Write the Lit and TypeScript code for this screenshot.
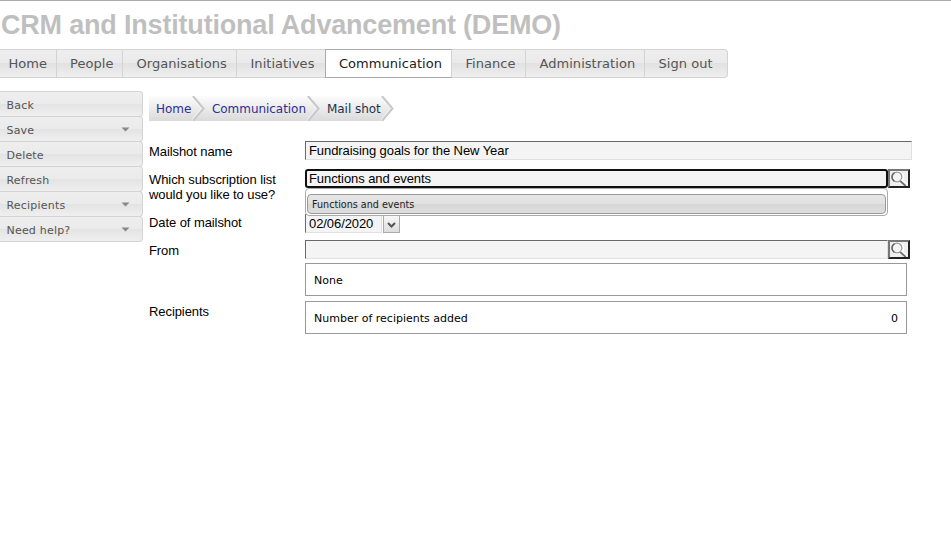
import { LitElement, html, css, svg } from "lit";
import { customElement } from "lit/decorators.js";
import { classMap } from "lit/directives/class-map.js";

const tabs = [
  { label: "Home", width: 57, pad: 8.5, active: false },
  { label: "People", width: 66, pad: 13, active: false },
  { label: "Organisations", width: 114, pad: 13.5, active: false },
  { label: "Initiatives", width: 89, pad: 13.5, active: false },
  { label: "Communication", width: 127, pad: 13, active: true },
  { label: "Finance", width: 74, pad: 13.5, active: false },
  { label: "Administration", width: 119, pad: 13.5, active: false },
  { label: "Sign out", width: 83, pad: 13.5, active: false },
];

const actions = [
  { label: "Back", menu: false },
  { label: "Save", menu: true },
  { label: "Delete", menu: false },
  { label: "Refresh", menu: false },
  { label: "Recipients", menu: true },
  { label: "Need help?", menu: true },
];

const crumbs = [
  { label: "Home", width: 56, here: false },
  { label: "Communication", width: 115, here: false },
  { label: "Mail shot", width: 73, here: true },
];

const magnifier = svg`
  <circle cx="7.4" cy="6.2" r="5.6" fill="#f4f4f4" stroke="#fff" stroke-width="2"></circle>
  <circle cx="7" cy="6" r="4.9" fill="none" stroke="#999" stroke-width="1.2"></circle>
  <path d="M4.6 1.6A5 5 0 0 0 4.4 10.3" fill="none" stroke="#666" stroke-width="1.5"></path>
  <path d="M10.8 9.2L16.8 14.2" stroke="#fff" stroke-width="2.6"></path>
  <path d="M10.2 10L15.8 15" stroke="#707070" stroke-width="1.8"></path>`;

@customElement("app-root")
export class AppRoot extends LitElement {
  static styles = css`
    :host {
      display: block;
      box-sizing: border-box;
      height: 534px;
      overflow: hidden;
      background: #fff;
      border-top: 1px solid #aaa;
      color: #000;
      font: 13px/15px "Liberation Sans", Arial, sans-serif;
      letter-spacing: -0.08px;
    }
    * { box-sizing: border-box; }
    h1 {
      margin: 0;
      height: 48px;
      padding: 9px 0 0 1px;
      color: #bfbfbf;
      font-size: 27px;
      line-height: 31px;
      font-weight: bold;
      letter-spacing: -0.19px;
      white-space: nowrap;
    }
    nav, aside, .crumbs, .box, .option { font-family: "DejaVu Sans", Verdana, sans-serif; letter-spacing: 0; }
    nav { display: flex; height: 29px; }
    .tab {
      height: 29px;
      border: 1px solid #d3d3d3;
      border-left: 0;
      background: linear-gradient(#eee 0, #eaeaea 48%, #e1e1e1 50%, #efefef 100%);
      color: #555;
      line-height: 27px;
      letter-spacing: 0.04px;
      white-space: nowrap;
    }
    .tab:last-child { border-radius: 0 4px 4px 0; }
    .tab.active {
      margin-left: -1px;
      border: 1px solid #aaa;
      border-right-color: #d3d3d3;
      background: #fff;
      color: #212121;
    }
    .page { display: flex; padding-top: 13px; }
    aside { width: 143px; flex: none; }
    .action {
      display: flex;
      align-items: center;
      justify-content: space-between;
      height: 26px;
      margin-bottom: -1px;
      padding: 2px 12px 0 6.5px;
      border: 1px solid #d3d3d3;
      border-left: 0;
      border-radius: 0 4px 4px 0;
      background: linear-gradient(#eee 0, #ebebeb 48%, #e3e3e3 50%, #efefef 100%);
      color: #555;
      font-size: 11px;
      letter-spacing: 0.2px;
    }
    .action span { padding-top: 1px; }
    .action svg { margin-top: -2px; }
    main { padding: 5px 0 0 6px; }
    .crumbs { display: flex; height: 25px; font-size: 12px; line-height: 26px; }
    .crumb {
      display: flex;
      height: 25px;
      padding-left: 7px;
      background: linear-gradient(#fcfcfc, #dadada);
      color: #2e2e96;
      letter-spacing: -0.05px;
      white-space: nowrap;
    }
    .crumb.here { color: #1d3350; }
    .crumb svg { flex: none; margin-left: auto; }
    .row { display: flex; }
    .label { width: 156px; flex: none; padding-top: 3px; }
    .name { margin-top: 20px; height: 28px; }
    .list { height: 45px; }
    .date { height: 26px; }
    .date .label { padding-top: 1px; }
    .from { height: 61px; }
    .line { display: flex; }
    .input {
      height: 19px;
      width: 583px;
      padding-left: 3px;
      border: 1px solid #e0e0e0;
      border-top-color: #696969;
      border-left-color: #696969;
      background: #f4f4f4;
      line-height: 17px;
      white-space: nowrap;
    }
    .wide { width: 607px; }
    .focus { border: 2px solid #101010; border-radius: 3px; padding-left: 2px; line-height: 15px; }
    .find {
      width: 22px;
      height: 19px;
      border: 2px solid #222;
      border-top-color: #767676;
      border-left-color: #767676;
      background: #efefef;
    }
    .find svg { display: block; }
    .field { position: relative; }
    .menu {
      position: absolute;
      z-index: 1;
      top: 19px;
      left: 0;
      width: 583px;
      height: 28px;
      padding: 5px 1px 1px;
      border: 1px solid #aaa;
      border-radius: 4px;
      background: #fff;
    }
    .option {
      height: 20px;
      padding-left: 4px;
      border: 1px solid #999;
      border-radius: 4px;
      background: linear-gradient(#e6e6e6 0, #e1e1e1 48%, #d6d6d6 50%, #dedede 100%);
      color: #212121;
      font-size: 9.6px;
      line-height: 19px;
    }
    .day { width: 77px; }
    .pick {
      width: 17px;
      height: 18px;
      margin: 1px 0 0 1px;
      border: 1px solid #aaa;
      background: linear-gradient(#f8f8f8, #ddd);
    }
    .pick svg { display: block; }
    .box {
      display: flex;
      justify-content: space-between;
      width: 602px;
      height: 33px;
      padding: 0 8px;
      border: 1px solid #999;
      font-size: 11px;
      line-height: 33px;
    }
    .sender { margin-top: 4px; }
    .to .label { height: 33px; }
  `;

  private find() {
    return html`<div class="find"><svg width="18" height="15" viewBox="0 0 18 15">${magnifier}</svg></div>`;
  }

  render() {
    return html`
      <h1><span>CRM and Institutional Advancement (DEMO)</span></h1>
      <nav>
        ${tabs.map((t) => html`
          <div class=${classMap({ tab: true, active: t.active })} style="width:${t.width}px;padding-left:${t.pad}px">${t.label}</div>`)}
      </nav>
      <div class="page">
        <aside>
          ${actions.map((a) => html`
            <div class="action"><span>${a.label}</span>${a.menu
              ? html`<svg width="9" height="5" viewBox="0 0 9 5"><path d="M0.5 0.5H8.5L4.5 4.5Z" fill="#888"></path></svg>`
              : null}</div>`)}
        </aside>
        <main>
          <div class="crumbs">
            ${crumbs.map((c) => html`
              <div class=${classMap({ crumb: true, here: c.here })} style="width:${c.width}px">
                <span>${c.label}</span>
                <svg width="13" height="25" viewBox="0 0 13 25">
                  <path d="M1 0L12 12.5L1 25H${c.here ? 13 : 1}V0Z" fill=${c.here ? "#fff" : "none"}></path>
                  <path d="M0 0L10 12.5L0 25" fill="none" stroke="#f6f6f6" stroke-width="2"></path>
                  <path d="M1 0L11.5 12.5L1 25" fill="none" stroke="#c8c8c8" stroke-width="2"></path>
                </svg>
              </div>`)}
          </div>
          <div class="row name">
            <div class="label">Mailshot name</div>
            <div class="input wide">Fundraising goals for the New Year</div>
          </div>
          <div class="row list">
            <div class="label">Which subscription list<br>would you like to use?</div>
            <div class="field">
              <div class="line"><div class="input focus">Functions and events</div>${this.find()}</div>
              <div class="menu"><div class="option">Functions and events</div></div>
            </div>
          </div>
          <div class="row date">
            <div class="label">Date of mailshot</div>
            <div class="input day">02/06/2020</div>
            <div class="pick"><svg width="15" height="16" viewBox="0 0 15 16"><path d="M4 7L7.5 10.5L11 7" fill="none" stroke="#555" stroke-width="2"></path></svg></div>
          </div>
          <div class="row from">
            <div class="label">From</div>
            <div>
              <div class="line"><div class="input"></div>${this.find()}</div>
              <div class="box sender">None</div>
            </div>
          </div>
          <div class="row to">
            <div class="label">Recipients</div>
            <div class="box"><span>Number of recipients added</span><span>0</span></div>
          </div>
        </main>
      </div>`;
  }
}
